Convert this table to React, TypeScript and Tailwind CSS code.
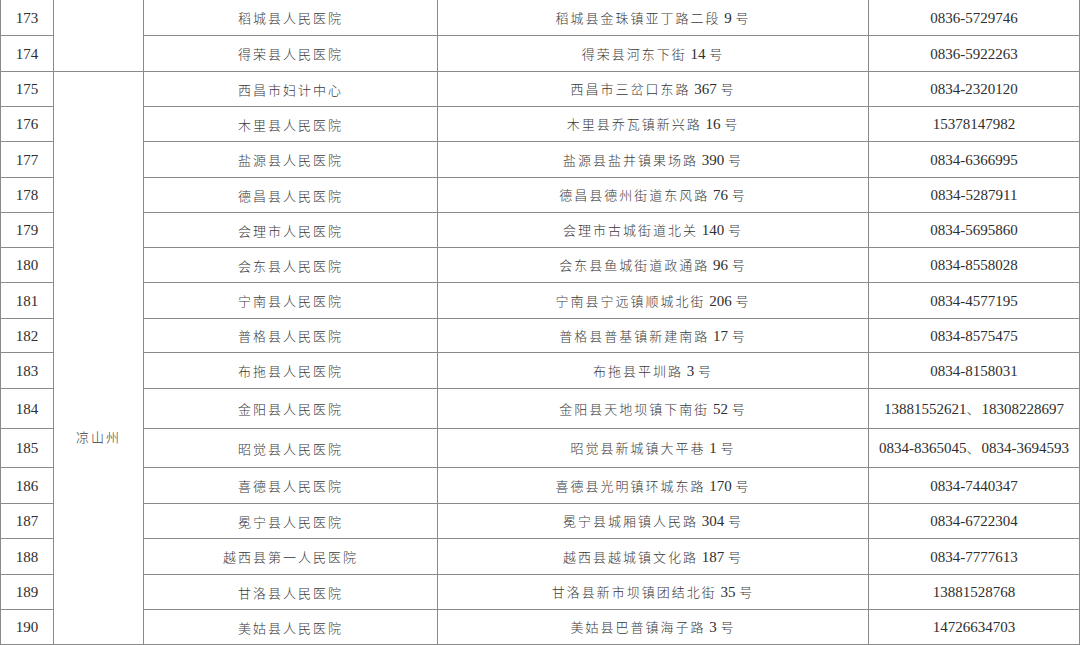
const rows: [string, string, string, string, number][] = [
  ["173", "稻城县人民医院", "稻城县金珠镇亚丁路二段 9 号", "0836-5729746", 35],
  ["174", "得荣县人民医院", "得荣县河东下街 14 号", "0836-5922263", 36],
  ["175", "西昌市妇计中心", "西昌市三岔口东路 367 号", "0834-2320120", 35],
  ["176", "木里县人民医院", "木里县乔瓦镇新兴路 16 号", "15378147982", 35],
  ["177", "盐源县人民医院", "盐源县盐井镇果场路 390 号", "0834-6366995", 36],
  ["178", "德昌县人民医院", "德昌县德州街道东风路 76 号", "0834-5287911", 35],
  ["179", "会理市人民医院", "会理市古城街道北关 140 号", "0834-5695860", 35],
  ["180", "会东县人民医院", "会东县鱼城街道政通路 96 号", "0834-8558028", 35],
  ["181", "宁南县人民医院", "宁南县宁远镇顺城北街 206 号", "0834-4577195", 36],
  ["182", "普格县人民医院", "普格县普基镇新建南路 17 号", "0834-8575475", 34],
  ["183", "布拖县人民医院", "布拖县平圳路 3 号", "0834-8158031", 36],
  ["184", "金阳县人民医院", "金阳县天地坝镇下南街 52 号", "13881552621、18308228697", 40],
  ["185", "昭觉县人民医院", "昭觉县新城镇大平巷 1 号", "0834-8365045、0834-3694593", 39],
  ["186", "喜德县人民医院", "喜德县光明镇环城东路 170 号", "0834-7440347", 36],
  ["187", "冕宁县人民医院", "冕宁县城厢镇人民路 304 号", "0834-6722304", 35],
  ["188", "越西县第一人民医院", "越西县越城镇文化路 187 号", "0834-7777613", 36],
  ["189", "甘洛县人民医院", "甘洛县新市坝镇团结北街 35 号", "13881528768", 35],
  ["190", "美姑县人民医院", "美姑县巴普镇海子路 3 号", "14726634703", 35],
];

// CJK runs are set smaller with tracking, Latin digits in a Times-width serif
const Txt = ({ text }: { text: string }) => (
  <>
    {text.split(/([\u3000-\u303f\u4e00-\u9fff\uff00-\uffef]+)/).map((seg, i) =>
      seg === "" ? null : /[\u3000-\u303f\u4e00-\u9fff\uff00-\uffef]/.test(seg) ? (
        <span key={i} className="font-['Noto_Sans_CJK_SC',sans-serif] font-light text-[13px] tracking-[2px] text-[#3a3a3a]">
          {seg}
        </span>
      ) : (
        <span key={i} className="font-['Liberation_Serif',serif] text-[15px] text-[#2e2e2e]">
          {seg}
        </span>
      )
    )}
  </>
);

const cell = "border border-[#8a8a8a] text-center align-middle p-0 whitespace-nowrap";

export default function App() {
  return (
    <div className="w-[1080px] h-[645px] overflow-hidden bg-white">
      <table className="table-fixed border-collapse w-[1079px]">
        <colgroup>
          <col className="w-[53px]" />
          <col className="w-[90px]" />
          <col className="w-[294px]" />
          <col className="w-[431px]" />
          <col className="w-[211px]" />
        </colgroup>
        <tbody>
          {rows.map(([no, name, addr, tel, h], i) => {
            const top = i === 0 ? " border-t-0" : "";
            return (
              <tr key={no} style={{ height: h }}>
                <td className={cell + top}>
                  <Txt text={no} />
                </td>
                {i === 0 && <td rowSpan={2} className={cell + top} />}
                {i === 2 && (
                  <td rowSpan={16} className={cell + " align-top pt-[352px]"}>
                    <Txt text="凉山州" />
                  </td>
                )}
                <td className={cell + top}>
                  <Txt text={name} />
                </td>
                <td className={cell + top}>
                  <Txt text={addr} />
                </td>
                <td className={cell + top}>
                  <Txt text={tel} />
                </td>
              </tr>
            );
          })}
        </tbody>
      </table>
    </div>
  );
}
